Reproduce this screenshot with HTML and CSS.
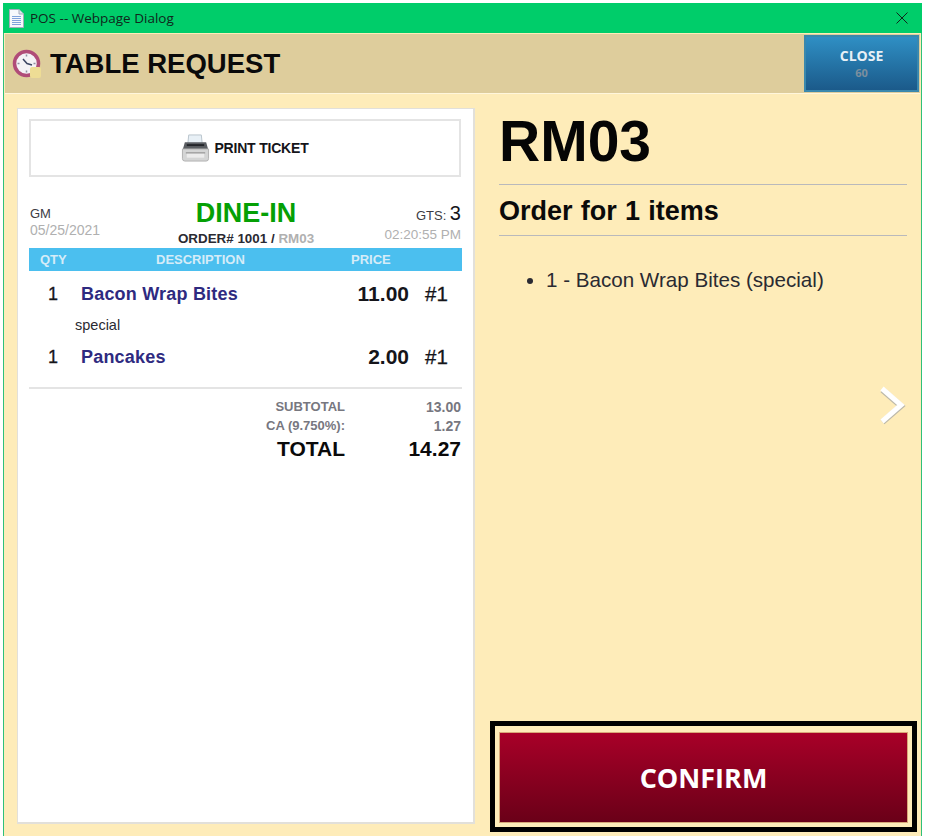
FILE: index.html
```html
<!DOCTYPE html>
<html>
<head>
    <title>POS -- Webpage Dialog</title>
    <link rel="stylesheet" href="styles.css">
</head>
<body>
    <div class="window">
        <div class="titlebar">
            <svg class="docicon" width="15" height="19" viewBox="0 0 15 19">
                <path d="M.5 .5H10L14.500 5V18.500H.5Z" fill="#f6f8fc" stroke="#a4adbc"/>
                <path d="M10 .5V5H14.500" fill="#dfe6f0" stroke="#a4adbc"/>
                <path d="M3 7.500H12M3 9.500H12M3 11.500H12M3 13.500H12M3 15.500H12" stroke="#7fa3dc"/>
            </svg>
            <span class="titletext">POS -- Webpage Dialog</span>
            <svg class="closex" width="12" height="12" viewBox="0 0 12 12">
                <path d="M.5 .5L11.500 11.500M11.500 .5L.5 11.500" stroke="#10261c" stroke-width="1"/>
            </svg>
        </div>

        <div class="header">
            <svg class="clockicon" width="30" height="30" viewBox="0 0 30 30">
                <circle cx="14.500" cy="14.500" r="12" fill="#f4f2f6" stroke="#b04c78" stroke-width="3.500"/>
                <path d="M14.500 5.500V7.500M14.500 21.500V23.500M5.500 14.500H7.500M21.500 14.500H23.500" stroke="#8c8fa0" stroke-width="1.500"/>
                <path d="M11 10L15 14.500L20 16" fill="none" stroke="#3c4664" stroke-width="1.500"/>
                <rect x="18" y="18" width="11" height="11" rx="2" fill="#eedd95"/>
            </svg>
            <h1 class="headertitle">TABLE REQUEST</h1>
            <button class="closebutton">CLOSE<span class="closecount">60</span></button>
        </div>

        <div class="content">
            <div class="ticket">
                <div class="printbutton">
                    <svg width="29" height="30" viewBox="0 0 30 30">
                        <path d="M8 1.500H21L22 11H7Z" fill="#e8f0f6" stroke="#b9c4cc"/>
                        <path d="M4 9H26L28 16H2Z" fill="#5a5d62"/>
                        <path d="M6 12H24" stroke="#23252a" stroke-width="2"/>
                        <path d="M1.500 16H28.500V26Q28.500 28.500 26 28.500H4Q1.500 28.500 1.500 26Z" fill="#d4d5d5" stroke="#b0b0b0"/>
                        <path d="M5 20H25" stroke="#a0a0a0" stroke-width="1.500"/>
                        <path d="M6 21H24V25H6Z" fill="#ececec"/>
                    </svg>
                    <span class="printtext">PRINT TICKET</span>
                </div>

                <div class="meta">
                    <div class="metaleft">
                        <div class="server">GM</div>
                        <div class="metadate">05/25/2021</div>
                    </div>
                    <div class="metacenter">
                        <div class="ordertype">DINE-IN</div>
                        <div class="ordernum">ORDER# <b>1001</b> / <span class="orderroom">RM03</span></div>
                    </div>
                    <div class="metaright">
                        <div class="guests">GTS: <span class="guestcount">3</span></div>
                        <div class="metatime">02:20:55 PM</div>
                    </div>
                </div>

                <div class="tablehead">
                    <span class="headqty">QTY</span>
                    <span class="headdesc">DESCRIPTION</span>
                    <span class="headprice">PRICE</span>
                </div>

                <div class="items">
                    <div class="itemrow">
                        <span class="itemqty">1</span>
                        <span class="itemname">Bacon Wrap Bites</span>
                        <span class="itemprice">11.00</span>
                        <span class="itemseat">#1</span>
                    </div>
                    <div class="itemnote">special</div>
                    <div class="itemrow">
                        <span class="itemqty">1</span>
                        <span class="itemname">Pancakes</span>
                        <span class="itemprice">2.00</span>
                        <span class="itemseat">#1</span>
                    </div>
                </div>

                <div class="totals">
                    <div class="totalrow"><span class="totallabel">SUBTOTAL</span><span class="totalvalue">13.00</span></div>
                    <div class="totalrow"><span class="totallabel">CA (9.750%):</span><span class="totalvalue">1.27</span></div>
                    <div class="totalrow grand"><span class="totallabel">TOTAL</span><span class="totalvalue">14.27</span></div>
                </div>
            </div>

            <div class="side">
                <div class="sidetop">
                    <div class="room">RM03</div>
                    <div class="ordercount">Order for 1 items</div>
                    <ul class="orderlist">
                        <li>1 - Bacon Wrap Bites (special)</li>
                    </ul>
                    <svg class="nextarrow" width="30" height="42" viewBox="0 0 30 42">
                        <path d="M5.500 6L24 22L5.500 38" fill="none" stroke="#bdb9aa" stroke-width="6"/>
                        <path d="M5 4.500L24 21L5 37.500" fill="none" stroke="#ffffff" stroke-width="5"/>
                    </svg>
                </div>
                <div class="confirmwrap">
                    <button class="confirmbutton">CONFIRM</button>
                </div>
            </div>
        </div>
    </div>
</body>
</html>
```

FILE: styles.css
```css
body {
    margin: 0;
    background-color: white;
    font-family: "Liberation Sans", Arial, sans-serif;
}
.window {
    width: 917px;
    height: 833px;
    margin: 3px 0 0 3px;
    border-left: 1px solid #2fc07a;
    border-right: 1px solid #2fc07a;
    background-color: #feecb9;
    display: flex;
    flex-direction: column;
}
.titlebar {
    height: 30px;
    margin: 0 -1px;
    padding: 0 14px 0 6px;
    background-color: #00cd6a;
    display: flex;
    align-items: center;
}
.titletext {
    margin-left: 6px;
    flex: 1;
    font-family: "Open Sans", sans-serif;
    font-size: 13.5px;
    color: #10261c;
}
.header {
    height: 59px;
    margin: 1px 1px 0;
    border-bottom: 1px solid #fff6dc;
    background-color: #decd9c;
    display: flex;
    align-items: center;
    padding-left: 7px;
    padding-right: 1px;
}
.clockicon {
    flex: none;
}
.headertitle {
    margin: 0 0 0 8px;
    flex: 1;
    font-size: 27.5px;
    font-weight: bold;
    color: #0a0a0a;
}
.closebutton {
    width: 115px;
    height: 57px;
    padding: 0 0 2px;
    border: 2px solid #3a88ad;
    background: linear-gradient(#2f8fc4, #1b5a8a);
    font-family: "Open Sans", sans-serif;
    font-size: 14px;
    font-weight: bold;
    color: #e8f0f6;
    display: flex;
    flex-direction: column;
    align-items: center;
    justify-content: center;
    line-height: 19px;
}
.closecount {
    font-size: 11px;
    font-weight: bold;
    color: #7c8f9e;
    line-height: 15px;
}
.content {
    flex: 1;
    display: flex;
    min-height: 0;
    padding: 14px 0 0 13px;
}
.ticket {
    width: 458px;
    height: 716px;
    box-sizing: border-box;
    padding: 10px 11px 9px;
    background-color: white;
    border: 1px solid #e2e0da;
    border-width: 1px 2px 2px 1px;
    display: flex;
    flex-direction: column;
}
.printbutton {
    height: 58px;
    margin-right: 1px;
    box-sizing: border-box;
    border: 2px solid #e4e4e4;
    display: flex;
    align-items: center;
    justify-content: center;
    gap: 4px;
}
.printtext {
    font-size: 14px;
    font-weight: bold;
    letter-spacing: -0.2px;
    color: #15151a;
}
.meta {
    margin-top: 20px;
    height: 49px;
    display: flex;
    justify-content: space-between;
}
.metaleft {
    padding-left: 1px;
    padding-top: 9px;
    width: 120px;
}
.server {
    font-size: 13px;
    line-height: 16px;
    color: #3c3c44;
}
.metadate {
    font-size: 14px;
    line-height: 17px;
    color: #b0b0b0;
}
.metacenter {
    text-align: center;
}
.ordertype {
    font-size: 27px;
    font-weight: bold;
    line-height: 32px;
    color: #05a005;
}
.ordernum {
    margin-top: 2px;
    font-size: 13.4px;
    font-weight: bold;
    line-height: 16px;
    white-space: nowrap;
    color: #2a2a32;
}
.orderroom {
    color: #b0b0b0;
}
.metaright {
    width: 120px;
    padding-right: 1px;
    box-sizing: border-box;
    text-align: right;
}
.guests {
    padding-top: 6px;
    font-size: 13px;
    line-height: 20px;
    color: #3c3c44;
}
.guestcount {
    font-size: 20px;
    color: #15151a;
}
.metatime {
    font-size: 13.5px;
    line-height: 17px;
    color: #b0b0b0;
}
.tablehead {
    margin-top: 2px;
    height: 23px;
    background-color: #4bbfef;
    display: flex;
    align-items: center;
    font-size: 13px;
    font-weight: bold;
    color: #d5ecf8;
}
.headqty {
    width: 127px;
    padding-left: 11px;
    box-sizing: border-box;
}
.headdesc {
    width: 195px;
}
.headprice {
    width: 60px;
}
.items {
    padding-top: 9px;
    height: 107px;
    border-bottom: 2px solid #e4e4e4;
}
.itemrow {
    height: 28px;
    display: flex;
    align-items: center;
    font-size: 18px;
    font-weight: bold;
    color: #15151a;
}
.itemqty {
    width: 52px;
    padding-left: 19px;
    box-sizing: border-box;
    font-weight: normal;
    -webkit-text-stroke: 0.3px #15151a;
}
.itemname {
    flex: 1;
    letter-spacing: 0.2px;
    color: #2e2a80;
}
.itemprice {
    width: 80px;
    font-size: 21px;
    text-align: right;
}
.itemseat {
    width: 53px;
    padding-left: 16px;
    box-sizing: border-box;
    font-size: 20.5px;
    font-weight: normal;
    -webkit-text-stroke: 0.3px #15151a;
}
.itemnote {
    height: 35px;
    box-sizing: border-box;
    padding: 9px 0 0 46px;
    font-size: 14.5px;
    line-height: 16px;
    color: #2a2a32;
}
.totals {
    padding-top: 8px;
    font-weight: bold;
}
.totalrow {
    display: flex;
    justify-content: flex-end;
    height: 19px;
    align-items: center;
    font-size: 13px;
    color: #77777f;
}
.totallabel {
    text-align: right;
}
.totalvalue {
    width: 117px;
    padding-right: 1px;
    box-sizing: border-box;
    font-size: 14px;
    text-align: right;
}
.grand {
    height: 28px;
    font-size: 21px;
    color: #0a0a0a;
}
.grand .totalvalue {
    font-size: 21px;
}
.side {
    flex: 1;
    display: flex;
    flex-direction: column;
    padding-left: 15px;
    padding-bottom: 4px;
    min-width: 0;
}
.sidetop {
    position: relative;
    flex: 1;
    padding: 0 14px 0 9px;
}
.room {
    height: 76px;
    border-bottom: 1px solid #b9b9bc;
    font-size: 57px;
    font-weight: bold;
    line-height: 66px;
    color: #050505;
}
.ordercount {
    height: 50px;
    border-bottom: 1px solid #b9b9bc;
    font-size: 27px;
    font-weight: bold;
    line-height: 52px;
    word-spacing: 0.7px;
    color: #0a0a0a;
}
.orderlist {
    margin: 30px 0 0;
    padding-left: 47px;
    font-size: 20.6px;
    line-height: 28px;
    color: #2a2a32;
}
.nextarrow {
    position: absolute;
    left: 387px;
    top: 276px;
}
.confirmwrap {
    width: 427px;
    height: 111px;
    box-sizing: border-box;
    border: 5px solid black;
    padding: 6px 4px 4px;
}
.confirmbutton {
    display: block;
    width: 100%;
    height: 100%;
    border: 1px solid #d8a878;
    background: linear-gradient(#a80028, #6a0018);
    font-family: "Open Sans", sans-serif;
    font-size: 27px;
    font-weight: bold;
    color: white;
}
```
